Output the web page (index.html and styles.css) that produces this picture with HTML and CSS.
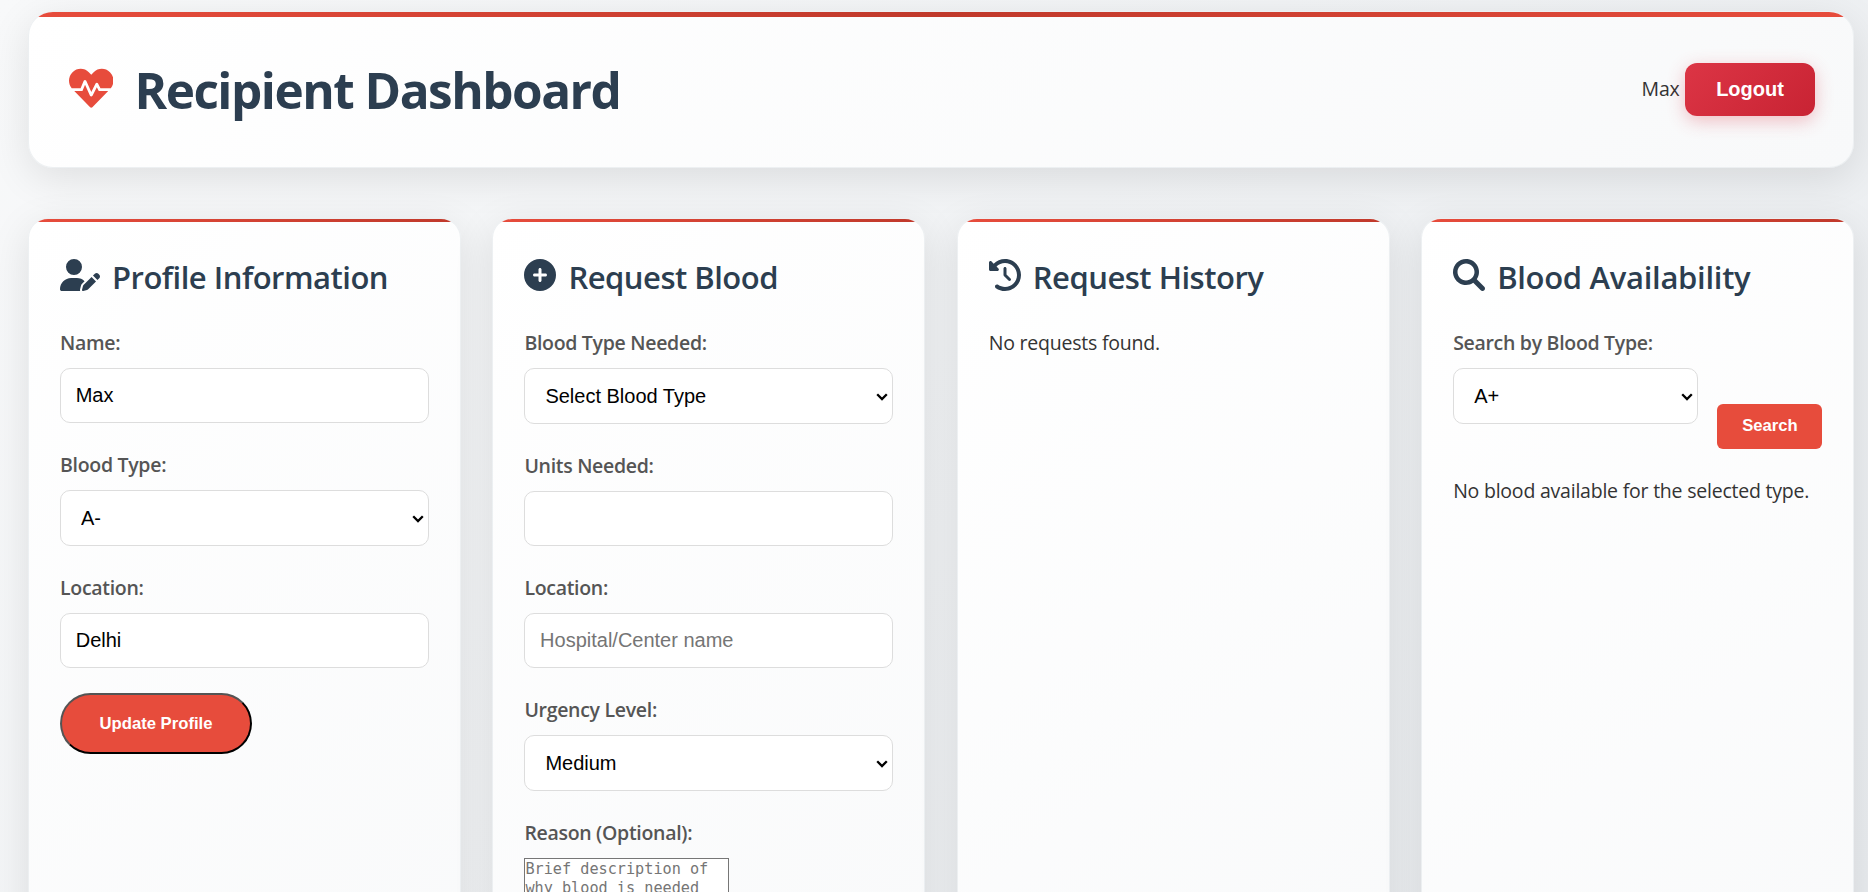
FILE: index.html
```
<!DOCTYPE html>
<html lang="en">
<head>
<meta charset="utf-8">
<title>Recipient Dashboard</title>
<link rel="stylesheet" href="styles.css">
</head>
<body>
<div class="container">
  <header class="header">
    <h1 class="header-title">
      <svg class="header-icon" viewBox="0 0 512 512" aria-hidden="true"><path d="M320.2 243.8l-49.7 99.4c-6 12.1-23.4 11.7-28.9-.6l-56.9-126.3-30 71.7H60.6l182.5 186.5c7.1 7.3 18.6 7.3 25.7 0L451.4 288H342.3l-22.1-44.2zM473.7 73.9l-2.4-2.5c-51.5-52.6-135.8-52.6-187.4 0L256 100l-27.9-28.5c-51.5-52.7-135.9-52.7-187.4 0l-2.4 2.4C-10.4 123.7-12.5 203 31 256h102.4l35.9-86.2c5.4-12.9 23.6-13.1 29.2-.4l58.2 129.3 49-97.9c5.9-11.8 22.7-11.8 28.6 0l27.6 55.2H481c43.5-53 41.4-132.3-7.3-182.1z"/></svg>
      <span>Recipient Dashboard</span>
    </h1>
    <div class="user">
      <span class="user-name">Max</span>
      <button class="logout" type="button">Logout</button>
    </div>
  </header>

  <main class="cards">
    <section class="card">
      <h2 class="card-title">
        <svg class="icon icon-wide" viewBox="0 0 640 512" aria-hidden="true"><path d="M224 256A128 128 0 1 0 224 0a128 128 0 1 0 0 256zm-45.7 48C79.8 304 0 383.8 0 482.3C0 498.7 13.3 512 29.7 512H322.8c-3.1-8.8-3.7-18.4-1.4-27.8l15-60.1c2.8-11.3 8.6-21.5 16.8-29.7l40.3-40.3c-32.1-31-75.7-50.1-123.9-50.1H178.3zm435.5-68.3c-15.6-15.6-40.9-15.6-56.6 0l-29.4 29.4 71 71 29.4-29.4c15.6-15.6 15.6-40.9 0-56.6l-14.4-14.4zM375.9 417c-4.1 4.1-7 9.2-8.4 14.9l-15 60.1c-1.4 5.5 .2 11.2 4.2 15.2s9.7 5.6 15.2 4.2l60.1-15c5.6-1.4 10.8-4.3 14.9-8.4L576.1 358.7l-71-71L375.9 417z"/></svg>
        <span>Profile Information</span>
      </h2>
      <form>
        <div class="field">
          <label for="name">Name:</label>
          <input class="control" id="name" type="text" value="Max">
        </div>
        <div class="field">
          <label for="type">Blood Type:</label>
          <select class="control" id="type"><option>A-</option></select>
        </div>
        <div class="field">
          <label for="city">Location:</label>
          <input class="control" id="city" type="text" value="Delhi">
        </div>
        <button class="update" type="button">Update Profile</button>
      </form>
    </section>

    <section class="card">
      <h2 class="card-title">
        <svg class="icon" viewBox="0 0 512 512" aria-hidden="true"><path d="M256 512A256 256 0 1 0 256 0a256 256 0 1 0 0 512zM232 344V280H168c-13.3 0-24-10.7-24-24s10.7-24 24-24h64V168c0-13.3 10.7-24 24-24s24 10.7 24 24v64h64c13.3 0 24 10.7 24 24s-10.7 24-24 24H280v64c0 13.3-10.7 24-24 24s-24-10.7-24-24z"/></svg>
        <span>Request Blood</span>
      </h2>
      <form>
        <div class="field">
          <label for="needed">Blood Type Needed:</label>
          <select class="control" id="needed"><option>Select Blood Type</option></select>
        </div>
        <div class="field">
          <label for="units">Units Needed:</label>
          <input class="control" id="units" type="number">
        </div>
        <div class="field">
          <label for="hospital">Location:</label>
          <input class="control" id="hospital" type="text" placeholder="Hospital/Center name">
        </div>
        <div class="field">
          <label for="urgency">Urgency Level:</label>
          <select class="control" id="urgency"><option>Medium</option></select>
        </div>
        <div class="field">
          <label for="reason">Reason (Optional):</label>
          <textarea class="reason" id="reason" placeholder="Brief description of why blood is needed"></textarea>
        </div>
      </form>
    </section>

    <section class="card">
      <h2 class="card-title">
        <svg class="icon" viewBox="0 0 512 512" aria-hidden="true"><path d="M75 75L41 41C25.9 25.9 0 36.6 0 57.9V168c0 13.3 10.7 24 24 24H134.1c21.4 0 32.1-25.9 17-41l-30.8-30.8C155 85.5 203 64 256 64c106 0 192 86 192 192s-86 192-192 192c-40.8 0-78.6-12.7-109.7-34.4c-14.5-10.1-34.4-6.6-44.6 7.9s-6.6 34.4 7.9 44.6C151.2 495 201.7 512 256 512c141.4 0 256-114.6 256-256S397.4 0 256 0C185.3 0 121.3 28.7 75 75zm181 53c-13.3 0-24 10.7-24 24V256c0 6.4 2.5 12.5 7 17l72 72c9.4 9.4 24.6 9.4 33.9 0s9.4-24.6 0-33.9l-65-65V152c0-13.3-10.7-24-24-24z"/></svg>
        <span>Request History</span>
      </h2>
      <p class="message">No requests found.</p>
    </section>

    <section class="card">
      <h2 class="card-title card-title-loose">
        <svg class="icon" viewBox="0 0 512 512" aria-hidden="true"><path d="M500.3 443.7l-119.7-119.7c27.22-40.41 40.65-90.9 33.46-144.7C401.8 87.79 326.8 13.32 235.2 1.723C99.01-15.51-15.51 99.01 1.724 235.2c11.6 91.64 86.08 166.7 177.6 178.9c53.8 7.189 104.3-6.236 144.7-33.46l119.7 119.7c15.62 15.62 40.95 15.62 56.57 0C515.9 484.7 515.9 459.3 500.3 443.7zM72 208c0-75 61-136 136-136s136 61 136 136c0 75-61 136-136 136S72 283 72 208z"/></svg>
        <span>Blood Availability</span>
      </h2>
      <form class="search-row">
        <div class="field">
          <label for="search">Search by Blood Type:</label>
          <select class="control" id="search"><option>A+</option></select>
        </div>
        <button class="search" type="button">Search</button>
      </form>
      <p class="message">No blood available for the selected type.</p>
    </section>
  </main>
</div>
</body>
</html>
```
FILE: styles.css
```
* {
  box-sizing: border-box;
  margin: 0;
  padding: 0;
}

html,
body {
  height: 100%;
  overflow: hidden;
}

body {
  background: linear-gradient(135deg, #f8f9fa 0%, #e9ecef 100%);
  color: #333;
  font-family: "Segoe UI", "Open Sans", "Noto Sans", sans-serif;
  font-size: 19.5px;
  letter-spacing: -0.22px;
  line-height: 32px;
}

.container {
  height: 100vh;
  padding: 11px 14px 0 28px;
  overflow: hidden;
}

.header {
  position: relative;
  display: flex;
  align-items: center;
  justify-content: space-between;
  height: 157px;
  margin-bottom: 50px;
  padding: 0 38px 0 39.5px;
  overflow: hidden;
  border: 1px solid rgba(233, 236, 239, 0.8);
  border-radius: 25px;
  background: linear-gradient(145deg, #fff, #f8f9fa);
}

.header,
.card {
  box-shadow: 0 10px 40px rgba(0, 0, 0, 0.1);
}

.header::before,
.card::before {
  content: "";
  position: absolute;
  top: 0;
  right: 0;
  left: 0;
  height: 3px;
  background: linear-gradient(90deg, #e74c3c, #c0392b);
}

.header::before {
  height: 5px;
  background: linear-gradient(90deg, #e74c3c, #c0392b, #e74c3c);
}

.header-title {
  display: flex;
  align-items: center;
  gap: 21.5px;
  color: #2c3e50;
  font-size: 49.5px;
  font-weight: 700;
  letter-spacing: -1.5px;
  line-height: 80px;
}

.header-icon {
  width: 44.5px;
  height: 44.5px;
  margin-bottom: 2px;
  fill: #e74c3c;
}

.user {
  display: flex;
  align-items: center;
  gap: 5.5px;
}

.user-name {
  padding-bottom: 1px;
}

button {
  color: #fff;
  font-family: "Liberation Sans", Arial, sans-serif;
  font-size: 16.67px;
  font-weight: 700;
}

.logout {
  width: 130px;
  height: 53px;
  border: 0;
  border-radius: 12px;
  background: linear-gradient(135deg, #dc3545, #c82333);
  box-shadow: 0 5px 18px rgba(220, 53, 69, 0.3);
  font-size: 20px;
}

.cards {
  display: grid;
  grid-template-columns: repeat(4, 1fr);
  gap: 31.5px;
}

.card {
  position: relative;
  height: 900px;
  padding: 31px;
  overflow: hidden;
  border: 1px solid rgba(233, 236, 239, 0.8);
  border-radius: 20px;
  background: linear-gradient(145deg, #fff, #f8f9fa);
}

.card-title {
  display: flex;
  align-items: center;
  gap: 12px;
  margin-bottom: 22px;
  color: #2c3e50;
  font-size: 31px;
  font-weight: 600;
  letter-spacing: -0.5px;
  line-height: 54px;
}

.card-title-loose {
  letter-spacing: -0.3px;
}

.icon {
  width: 32px;
  height: 32px;
  margin-bottom: 4px;
  fill: currentColor;
}

.icon-wide {
  width: 40px;
}

.field {
  margin-bottom: 25.6px;
}

label,
.message {
  padding-top: 1px;
}

label {
  display: block;
  margin-bottom: 9px;
  color: #555;
  font-weight: 600;
  letter-spacing: -0.3px;
}

.control {
  display: block;
  width: 100%;
  height: 54.5px;
  padding: 0 14.7px;
  border: 1px solid #ddd;
  border-radius: 10px;
  background: #fff;
  color: #000;
  font-family: "Liberation Sans", Arial, sans-serif;
  font-size: 20px;
}

select.control {
  height: 55.5px;
  padding: 0 20px;
  appearance: none;
  background: #fff url("data:image/svg+xml,%3Csvg xmlns='http://www.w3.org/2000/svg' width='12' height='8' viewBox='0 0 12 8'%3E%3Cpath d='M1.2 1.2L6 6l4.8-4.8' fill='none' stroke='%23000' stroke-width='2.3'/%3E%3C/svg%3E") no-repeat right 4px top 24px;
}

.update {
  display: block;
  width: 192px;
  height: 61px;
  border: 2px outset #000;
  border-radius: 31px;
  background: #e74c3c;
}

.reason {
  display: block;
  width: 205px;
  height: 47px;
  padding: 1px 0 0;
  border: 1px solid #767676;
  font-family: "DejaVu Sans Mono", monospace;
  font-size: 15.2px;
  line-height: 19px;
  resize: none;
  overflow: hidden;
}

.search-row {
  display: flex;
  align-items: flex-end;
  gap: 19.5px;
  margin-bottom: 25px;
}

.search-row .field {
  flex: 1;
}

.search {
  width: 105px;
  height: 45px;
  padding: 0 0 1px 1px;
  border: 0;
  border-radius: 6px;
  background: #e74c3c;
}
```
